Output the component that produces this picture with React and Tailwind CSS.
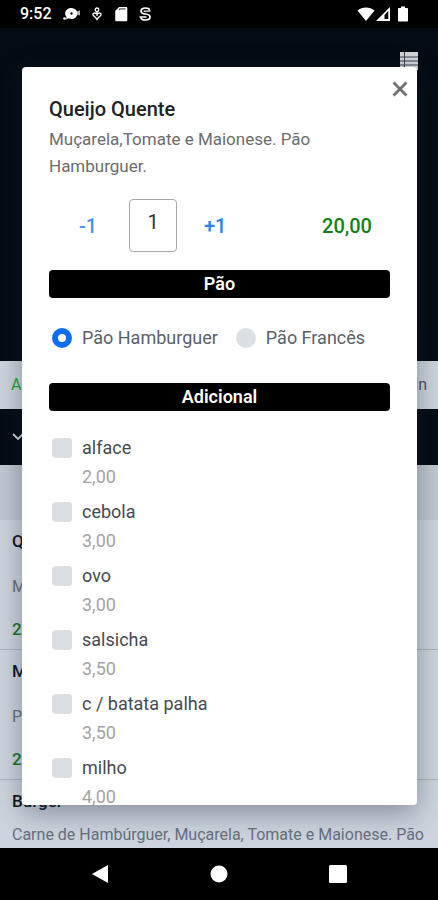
import { useState } from 'react'

const BREADS = ['Pão Hamburguer', 'Pão Francês']

const EXTRAS = [
  { id: 'alface', name: 'alface', price: 2 },
  { id: 'cebola', name: 'cebola', price: 3 },
  { id: 'ovo', name: 'ovo', price: 3 },
  { id: 'salsicha', name: 'salsicha', price: 3.5 },
  { id: 'batata', name: 'c / batata palha', price: 3.5 },
  { id: 'milho', name: 'milho', price: 4 },
]

const MENU = [
  { name: 'Queijo', desc: 'Muçarela', price: 20 },
  { name: 'Misto', desc: 'Presunto', price: 22 },
  { name: 'Burger', desc: 'Carne de Hambúrguer, Muçarela, Tomate e Maionese. Pão Hamburguer.', price: 25 },
]

function money(n) {
  return n.toFixed(2).replace('.', ',')
}

function StatusBar() {
  return (
    <header className="flex h-7 shrink-0 items-center bg-black pl-5 pr-7 text-white">
      <span className="w-[41px] text-base font-medium">9:52</span>
      <div className="flex items-center gap-2">
        <svg className="h-4 w-5" viewBox="0 0 20 16" fill="currentColor">
          <path fillRule="evenodd" d="M10.500 2a5.800 5.500 0 1 1 0 11c-1 0-2-.2-2.800-.7L5 13.500l.5-2.500a5.500 5.500 0 0 1 5-9zm0 4.300a1.200 1.200 0 1 0 0 2.400 1.200 1.200 0 0 0 0-2.400z" />
          <path d="M15 5.500l4-1v5l-4-1z" opacity=".7" />
          <circle cx="3.500" cy="12.500" r="1.300" />
        </svg>
        <svg className="h-4 w-4" viewBox="0 0 16 16" fill="none" stroke="currentColor" strokeWidth="1.300">
          <circle cx="8" cy="3.800" r="1.800" />
          <path d="M8 6v4M8 8.500c-1.500-2.500-4.500-1.500-4 .3.300 1.200 2.500 2.200 4 4.700 1.500-2.500 3.700-3.500 4-4.700.5-1.800-2.500-2.800-4-.3z" />
        </svg>
        <svg className="h-4 w-4" viewBox="0 0 16 16">
          <path d="M6 1h7c.8 0 1.300.5 1.300 1.300V14c0 .8-.5 1.300-1.300 1.300H3.500c-.8 0-1.300-.5-1.300-1.300V5z" fill="currentColor" />
          <path d="M6 4l1-1.200h5.500" stroke="#555" strokeWidth="1.200" fill="none" />
        </svg>
        <svg className="h-4 w-4" viewBox="0 0 16 16" fill="none" stroke="currentColor" strokeWidth="1.700">
          <path d="M12.500 4.500C12.500 2.500 10.500 2 8.500 2 6 2 4 2.800 4 5s2 2.800 4.500 3c2.500.2 4.500.8 4.500 3s-2 3-4.500 3-4.500-.7-4.500-2.500" />
          <path d="M6.500 5.200h7M2.500 11h7" strokeWidth="1.300" />
        </svg>
      </div>
      <div className="ml-auto flex items-center">
        <svg className="h-4 w-[18px]" viewBox="0 0 18 16" fill="currentColor">
          <path d="M9 15L.5 4.500C5 .5 13 .5 17.500 4.500z" />
        </svg>
        <svg className="h-4 w-4" viewBox="0 0 16 16">
          <path d="M15 1v14H1z" fill="currentColor" />
          <path d="M9.500 9l3.800-4v8H9.500z" fill="#000" />
        </svg>
        <svg className="ml-1.5 mr-px h-4 w-3" viewBox="0 0 12 16" fill="currentColor">
          <path d="M4 .5h4V2h2c.6 0 1 .4 1 1v11.500c0 .6-.4 1-1 1H2c-.6 0-1-.4-1-1V3c0-.6.4-1 1-1h2z" />
        </svg>
      </div>
    </header>
  )
}

function MenuPage() {
  return (
    <div className="flex h-full flex-col overflow-hidden bg-[#cdd4dd]">
      {/* Cover */}
      <div className="flex h-[333px] shrink-0 items-start justify-end bg-[#040b13] pr-5 pt-6">
        <button aria-label="Pedidos" className="text-[#d0d3d7]">
          <svg className="h-[18px] w-[18px]" viewBox="0 0 18 18">
            <rect width="18" height="18" fill="currentColor" />
            <path d="M4.500 0v18M0 5h18M0 9h18M0 13h18" stroke="#3a4048" strokeWidth="1" />
          </svg>
        </button>
      </div>
      <div className="flex h-12 shrink-0 items-center justify-between px-[11px] text-base">
        <span className="text-[#20a52a]">Aberto</span>
        <span className="text-[#4a525c]">30 min</span>
      </div>
      <button aria-label="Categorias" className="flex h-14 shrink-0 items-center bg-[#040b13] px-3 text-[#cfd5dd]">
        <svg className="h-3 w-3" viewBox="0 0 12 12" fill="none" stroke="currentColor" strokeWidth="1.800">
          <path d="M1 3l5 5 5-5" />
        </svg>
      </button>
      <div className="h-[55px] shrink-0 bg-[#c1c8d1]" />
      <ul>
        {MENU.map(item => (
          <li key={item.name} className="h-[130px] border-b border-[#adb5bf] px-3 pt-[7px]">
            <h2 className="text-[17px] leading-7 font-medium text-[#10151c]">{item.name}</h2>
            <div className="mt-2 flex h-12 items-center">
              <p className="text-base leading-6 text-[#66707c]">{item.desc}</p>
            </div>
            <p className="mt-1.5 text-[17px] leading-6 font-medium text-[#16761f]">{money(item.price)}</p>
          </li>
        ))}
      </ul>
    </div>
  )
}

function SectionTitle({ children }) {
  return (
    <h3 className="rounded bg-black text-center text-lg leading-7 font-semibold text-white">{children}</h3>
  )
}

function ItemDialog() {
  const [qty, setQty] = useState(1)
  const [bread, setBread] = useState(BREADS[0])
  const [extras, setExtras] = useState([])

  function toggle(id) {
    setExtras(prev => prev.includes(id) ? prev.filter(x => x !== id) : [...prev, id])
  }

  const extraTotal = EXTRAS.filter(e => extras.includes(e.id)).reduce((sum, e) => sum + e.price, 0)

  return (
    <div
      role="dialog"
      aria-labelledby="item-name"
      className="absolute top-[39px] right-[21px] bottom-[43px] left-[22px] overflow-y-auto rounded bg-white px-[27px] pt-7 shadow-[0_8px_28px_rgba(20,40,60,0.4)] [scrollbar-width:none]"
    >
      <button aria-label="Fechar" className="absolute top-3 right-[7px] flex h-5 w-5 items-center justify-center text-[#707070]">
        <svg className="h-4 w-4" viewBox="0 0 16 16" fill="none" stroke="currentColor" strokeWidth="2.800">
          <path d="M1.500 1.500l13 13M14.500 1.500l-13 13" />
        </svg>
      </button>

      <h2 id="item-name" className="text-xl leading-7 font-medium text-[#222]">Queijo Quente</h2>
      <p className="mt-[3px] text-[17px] leading-[27px] text-[#6c6c6c]">Muçarela,Tomate e Maionese. Pão Hamburguer.</p>

      {/* Quantity + price */}
      <div className="mt-[19px] flex items-center text-xl font-medium">
        <button onClick={() => setQty(q => Math.max(1, q - 1))} className="w-20 pl-[30px] text-left text-[#4a90f5]">-1</button>
        <input
          aria-label="Quantidade"
          value={qty}
          onChange={e => setQty(Number(e.target.value) || 1)}
          className="h-[53px] w-12 rounded border border-[#a8a8a8] pb-2 text-center font-normal text-[#333]"
        />
        <button onClick={() => setQty(q => q + 1)} className="w-20 pl-[27px] text-left text-[#2585f0]">+1</button>
        <span className="ml-auto pr-[18px] text-[#128017]">{money((20 + extraTotal) * qty)}</span>
      </div>

      <div className="mt-[18px]">
        <SectionTitle>Pão</SectionTitle>
      </div>
      <div className="flex h-[85px] items-center gap-[18px] pb-1.5 pl-[3px]">
        {BREADS.map(b => (
          <label key={b} className="flex items-center gap-2.5 text-lg whitespace-nowrap text-[#5a5f66]">
            <input
              type="radio"
              name="bread"
              checked={bread === b}
              onChange={() => setBread(b)}
              className="h-5 w-5 appearance-none rounded-full bg-[#dadfe4] checked:border-[6px] checked:border-[#0f6df5] checked:bg-white"
            />
            {b}
          </label>
        ))}
      </div>

      <SectionTitle>Adicional</SectionTitle>
      <ul className="mt-[21px]">
        {EXTRAS.map(e => (
          <li key={e.id} className="h-16 pl-[3px]">
            <label className="flex h-8 items-center gap-2.5 text-lg text-[#454a51]">
              <input
                type="checkbox"
                checked={extras.includes(e.id)}
                onChange={() => toggle(e.id)}
                className="h-5 w-5 appearance-none rounded bg-[#dadfe4] checked:bg-[#0f6df5]"
              />
              {e.name}
            </label>
            <p className="pl-[30px] text-lg leading-[26px] text-[#a3a3a3]">{money(e.price)}</p>
          </li>
        ))}
      </ul>
    </div>
  )
}

function NavBar() {
  return (
    <nav className="grid h-[52px] shrink-0 grid-cols-3 items-center bg-black px-10 text-white">
      <button aria-label="Voltar" className="flex justify-center">
        <svg className="h-5 w-[18px]" viewBox="0 0 18 20" fill="currentColor"><path d="M17 1v18L1 10z" /></svg>
      </button>
      <button aria-label="Início" className="flex justify-center">
        <svg className="h-[18px] w-[18px]" viewBox="0 0 18 18" fill="currentColor"><circle cx="9" cy="9" r="8.500" /></svg>
      </button>
      <button aria-label="Recentes" className="flex justify-center">
        <svg className="h-[18px] w-[18px]" viewBox="0 0 18 18" fill="currentColor"><rect width="18" height="18" rx="1.500" /></svg>
      </button>
    </nav>
  )
}

export default function App() {
  return (
    <div className="flex h-screen flex-col overflow-hidden font-[Roboto,sans-serif]">
      <StatusBar />
      <main className="relative min-h-0 flex-1">
        <MenuPage />
        <ItemDialog />
      </main>
      <NavBar />
    </div>
  )
}
